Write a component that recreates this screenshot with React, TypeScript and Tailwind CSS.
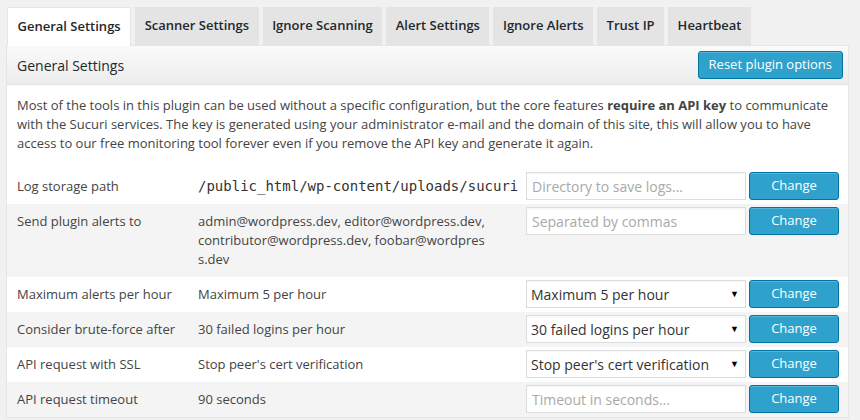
import React from "react";

const tabs = [
  "General Settings",
  "Scanner Settings",
  "Ignore Scanning",
  "Alert Settings",
  "Ignore Alerts",
  "Trust IP",
  "Heartbeat",
];

type Row = {
  label: string;
  value: React.ReactNode;
  mono?: boolean;
  input?: string;
  select?: string;
};

const rows: Row[] = [
  { label: "Log storage path", value: "/public_html/wp-content/uploads/sucuri", mono: true, input: "Directory to save logs..." },
  {
    label: "Send plugin alerts to",
    value: "admin@wordpress.dev, editor@wordpress.dev, contributor@wordpress.dev, foobar@wordpress.dev",
    input: "Separated by commas",
  },
  { label: "Maximum alerts per hour", value: "Maximum 5 per hour", select: "Maximum 5 per hour" },
  { label: "Consider brute-force after", value: "30 failed logins per hour", select: "30 failed logins per hour" },
  { label: "API request with SSL", value: "Stop peer's cert verification", select: "Stop peer's cert verification" },
  { label: "API request timeout", value: "90 seconds", input: "Timeout in seconds..." },
];

function ChangeButton() {
  return (
    <button className="w-[90px] h-[28px] rounded-[3px] border border-[#0074a2] bg-[#2ea2cc] text-white text-[13px] shadow-[inset_0_1px_0_rgba(120,200,230,0.5)]">
      Change
    </button>
  );
}

export default function App() {
  return (
    <div
      className="min-h-screen bg-[#f1f1f1] pt-[7px] pl-[6px] pr-[11px] text-[13px] text-[#444]"
      style={{ fontFamily: '"Open Sans", "Liberation Sans", sans-serif' }}
    >
      {/* tabs */}
      <div className="flex gap-[4px] pl-[1px]">
        {tabs.map((t, i) => (
          <div
            key={t}
            className={`h-[38px] flex items-center px-[9.5px] font-semibold text-[13px] text-[#23282d] ${
              i === 0 ? "bg-white border border-b-0 border-[#e5e5e5] -mb-px relative z-10 h-[39px]" : "bg-[#e4e4e4]"
            }`}
          >
            {t}
          </div>
        ))}
      </div>

      <div className="border border-[#e5e5e5] bg-white">
        {/* header */}
        <div className="h-[39px] flex items-center justify-between pl-[10px] pr-[5px] border-b border-[#e5e5e5] bg-gradient-to-b from-[#fafafa] to-[#ececec]">
          <span className="text-[14px] text-[#23282d]">General Settings</span>
          <button className="h-[28px] px-[10px] rounded-[3px] border border-[#0074a2] bg-[#2ea2cc] text-white text-[13px] shadow-[inset_0_1px_0_rgba(120,200,230,0.5)]">
            Reset plugin options
          </button>
        </div>

        <p className="px-[10px] pt-[11px] pb-[16px] leading-[19px]">
          Most of the tools in this plugin can be used without a specific configuration, but the core features{" "}
          <strong className="font-bold">require an API key</strong> to communicate with the Sucuri services. The key is
          generated using your administrator e-mail and the domain of this site, this will allow you to have access to our
          free monitoring tool forever even if you remove the API key and generate it again.
        </p>

        {/* table */}
        <div>
          {rows.map((r, i) => (
            <div key={r.label} className={`flex items-start ${i % 2 === 1 ? "bg-[#f4f4f4]" : "bg-white"}`}>
              <div className="w-[181px] shrink-0 pl-[10px] py-[8px] leading-[19px]">{r.label}</div>
              <div
                className={`w-[338px] shrink-0 pl-[10px] pr-[38px] py-[8px] leading-[19px] break-all ${
                  r.mono ? "text-[14px] text-[#333] whitespace-nowrap" : ""
                }`}
                style={r.mono ? { fontFamily: '"DejaVu Sans Mono", "Liberation Mono", monospace' } : undefined}
              >
                {r.value}
              </div>
              <div className="flex gap-[3px] py-[3px]">
                {r.select ? (
                  <div className="w-[220px] h-[28px] border border-[#ddd] bg-white flex items-center justify-between pl-[4px] pr-[6px] text-[14px] text-[#333] shadow-[inset_0_1px_2px_rgba(0,0,0,0.04)]">
                    <span>{r.select}</span>
                    <span className="text-[9px] text-black">▼</span>
                  </div>
                ) : (
                  <div className="w-[220px] h-[28px] border border-[#ddd] bg-white flex items-center pl-[5px] text-[14px] text-[#a9a9a9] shadow-[inset_0_1px_2px_rgba(0,0,0,0.04)]">
                    {r.input}
                  </div>
                )}
                <ChangeButton />
              </div>
            </div>
          ))}
        </div>
      </div>
    </div>
  );
}
